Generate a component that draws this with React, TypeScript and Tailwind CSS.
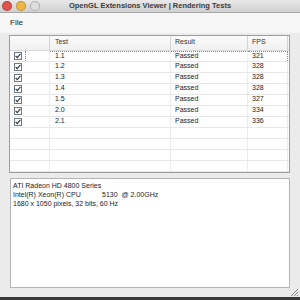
import React from 'react';

const rows = [
  { test: '1.1', result: 'Passed', fps: '321' },
  { test: '1.2', result: 'Passed', fps: '328' },
  { test: '1.3', result: 'Passed', fps: '328' },
  { test: '1.4', result: 'Passed', fps: '328' },
  { test: '1.5', result: 'Passed', fps: '327' },
  { test: '2.0', result: 'Passed', fps: '334' },
  { test: '2.1', result: 'Passed', fps: '336' },
];

const Checkbox = () => (
  <div className="w-[8px] h-[8px] border border-[#6f7a86] bg-white flex items-center justify-center">
    <svg width="6" height="6" viewBox="0 0 6 6">
      <path d="M0.6 2.8 L2.3 4.6 L5.4 0.9" stroke="#2a3440" strokeWidth="1.1" fill="none" />
    </svg>
  </div>
);

const TrafficLight = ({ color }: { color: string }) => (
  <div className={`w-[10px] h-[10px] rounded-full border border-black/20 ${color}`} />
);

const App = () => {
  const emptyRows = [0, 1, 2, 3];

  return (
    <div
      className="w-[300px] h-[300px] overflow-hidden flex flex-col bg-[#ebebeb] text-[#222]"
      style={{ fontFamily: '"Liberation Sans", Arial, sans-serif' }}
    >
      {/* title bar */}
      <div className="h-[13px] flex items-center bg-gradient-to-b from-[#e9e9e9] to-[#cfcfcf] border-b border-[#a8a8a8]">
        <div className="flex gap-[4px] pl-[2px] w-[50px]">
          <TrafficLight color="bg-[#e0524c]" />
          <TrafficLight color="bg-[#f0b540]" />
          <TrafficLight color="bg-[#dedede]" />
        </div>
        <div className="flex-1 text-center text-[7.5px] font-bold text-[#3a3a3a] leading-none">
          OpenGL Extensions Viewer | Rendering Tests
        </div>
        <div className="w-[50px]" />
      </div>

      {/* menu */}
      <div className="h-[20px] bg-[#f6f6f6] flex items-center px-[10px] text-[8px]">File</div>

      {/* table */}
      <div className="mt-[2px] ml-[9px] mr-[10px] h-[138px] border border-[#9c9c9c] bg-white flex flex-col text-[7px]">
        <div className="h-[16px] flex border-b border-[#d8d8d8] bg-gradient-to-b from-[#fbfbfb] to-[#f0f0f0] text-[#333]">
          <div className="w-[40px] border-r border-[#d5d5d5]" />
          <div className="w-[121px] border-r border-[#d5d5d5] pl-[5px] flex items-center">Test</div>
          <div className="w-[77px] border-r border-[#d5d5d5] pl-[4px] flex items-center">Result</div>
          <div className="w-[40px] border-r border-[#d5d5d5] pl-[4px] flex items-center">FPS</div>
        </div>
        {rows.map((r, i) => (
          <div key={r.test} className="h-[11px] flex border-b border-[#e8e8e8] shrink-0">
            <div className="w-[40px] border-r border-[#ececec] flex items-center pl-[4px] relative">
              <Checkbox />
              {i === 0 && <div className="absolute left-[15px] top-0 bottom-0 border-l border-dotted border-[#888]" />}
            </div>
            <div className={`w-[121px] border-r border-[#ececec] pl-[5px] flex items-center ${i === 0 ? 'border-t border-dotted border-t-[#888]' : ''}`}>
              {r.test}
            </div>
            <div className={`w-[77px] border-r border-[#ececec] pl-[4px] flex items-center ${i === 0 ? 'border-t border-dotted border-t-[#888]' : ''}`}>
              {r.result}
            </div>
            <div className={`w-[40px] border-r border-[#ececec] pl-[4px] flex items-center ${i === 0 ? 'border-t border-dotted border-t-[#888] border-r-[#888] border-r-dotted' : ''}`}>
              {r.fps}
            </div>
          </div>
        ))}
        {emptyRows.map((k) => (
          <div key={k} className="h-[11px] flex border-b border-[#e8e8e8] shrink-0">
            <div className="w-[40px] border-r border-[#ececec]" />
            <div className="w-[121px] border-r border-[#ececec]" />
            <div className="w-[77px] border-r border-[#ececec]" />
            <div className="w-[40px] border-r border-[#ececec]" />
          </div>
        ))}
        <div className="flex-1 flex">
          <div className="w-[40px] border-r border-[#ececec]" />
          <div className="w-[121px] border-r border-[#ececec]" />
          <div className="w-[77px] border-r border-[#ececec]" />
          <div className="w-[40px] border-r border-[#ececec]" />
        </div>
      </div>

      {/* info box */}
      <div className="mt-[5px] ml-[10px] mr-[10px] h-[112px] border border-[#b4b4b4] bg-white px-[2px] pt-[2px] text-[7px] leading-[9px] whitespace-pre">
        <div>ATI Radeon HD 4800 Series</div>
        <div>Intel(R) Xeon(R) CPU           5130  @ 2.00GHz</div>
        <div>1680 x 1050 pixels, 32 bits, 60 Hz</div>
      </div>

      {/* bottom with grip */}
      <div className="flex-1 flex justify-end items-end pr-[1px]">
        <svg width="9" height="9" viewBox="0 0 9 9">
          <path d="M8 1 L1 8 M8 4 L4 8 M8 7 L7 8" stroke="#8a8a8a" strokeWidth="1" />
        </svg>
      </div>
      <div className="h-[3px] bg-[#3a3a3a]" />
    </div>
  );
};

export default App;
